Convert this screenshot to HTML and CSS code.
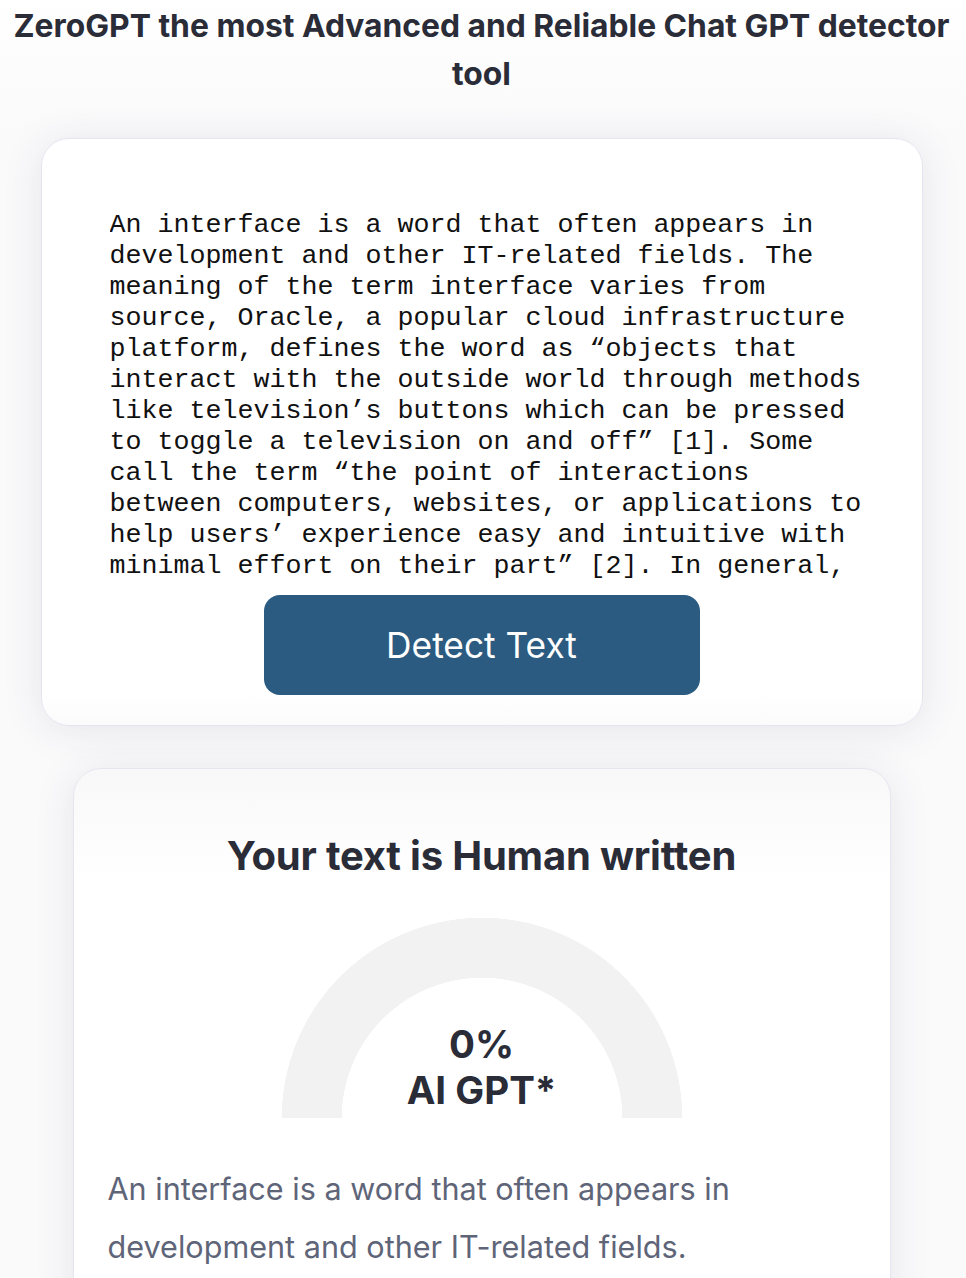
FILE: index.html
```html
<!DOCTYPE html>
<html lang="en">
<head>
<meta charset="utf-8">
<title>ZeroGPT</title>
<link rel="stylesheet" href="styles.css">
</head>
<body>
<main class="page">
  <h1 class="title">ZeroGPT the most Advanced and Reliable Chat GPT detector tool</h1>

  <section class="card card-input">
    <div class="input-text">An interface is a word that often appears in development and other IT-related fields. The meaning of the term interface varies from source, Oracle, a popular cloud infrastructure platform, defines the word as “objects that interact with the outside world through methods like television’s buttons which can be pressed to toggle a television on and off” [1]. Some call the term “the point of interactions between computers, websites, or applications to help users’ experience easy and intuitive with minimal effort on their part” [2]. In general,</div>
    <button class="detect-btn" type="button">Detect Text</button>
  </section>

  <section class="card card-result">
    <h2 class="result-title">Your text is Human written</h2>
    <div class="gauge">
      <div class="gauge-value">0%</div>
      <div class="gauge-label">AI GPT*</div>
    </div>
    <p class="result-text">An interface is a word that often appears in development and other IT-related fields.</p>
  </section>
</main>
</body>
</html>
```

FILE: styles.css
```css
* {
  box-sizing: border-box;
}

html, body {
  margin: 0;
  padding: 0;
}

body {
  background: linear-gradient(#ffffff 0, #fafafb 130px) #fafafb;
  font-family: Inter, "Noto Sans", sans-serif;
  color: #2a2c37;
  overflow: hidden;
}

.page {
  display: flex;
  flex-direction: column;
  align-items: center;
  padding: 2px 3px 0 0;
}

.title {
  margin: 0;
  width: 100%;
  padding: 0 8px;
  font-size: 31.8px;
  line-height: 48px;
  font-weight: 700;
  text-align: center;
  color: #2a2c37;
}

.card {
  background: #fff;
  border: 1px solid #e5e5f1;
  border-radius: 28px;
  box-shadow: 0 4px 40px rgba(50, 50, 100, 0.1);
}

.card-input {
  margin-top: 40px;
  width: 882px;
  padding: 71px 0 30px 68px;
  display: flex;
  flex-direction: column;
  background: linear-gradient(#fff 0, #fff 555px, #fbfbfc 100%);
}

.input-text {
  width: 760px;
  height: 372px;
  overflow: hidden;
  font-family: "Liberation Mono", "DejaVu Sans Mono", monospace;
  font-size: 26.667px;
  line-height: 31px;
  color: #111;
}

.detect-btn {
  align-self: center;
  margin: 13px 0 0 -68px;
  width: 436px;
  height: 100px;
  border: none;
  border-radius: 16px;
  background: #2b5b80;
  color: #fff;
  font-family: Inter, "Noto Sans", sans-serif;
  font-size: 35.3px;
  font-weight: 400;
}

.card-result {
  margin-top: 42px;
  width: 818px;
  padding: 63px 34px 40px;
  display: flex;
  flex-direction: column;
  align-items: center;
  background: linear-gradient(#f8f8f9 0, #fff 110px);
}

.result-title {
  margin: 0;
  font-size: 40px;
  line-height: 48px;
  font-weight: 700;
  color: #2a2c37;
  letter-spacing: -0.2px;
}

.gauge {
  margin-top: 38px;
  width: 400px;
  height: 200px;
  background: radial-gradient(circle at 50% 100%, #fff 0, #fff 140px, #f2f2f2 140.5px, #f2f2f2 200px, transparent 200.5px);
  display: flex;
  flex-direction: column;
  justify-content: flex-end;
  align-items: center;
  padding-bottom: 5px;
}

.gauge-value,
.gauge-label {
  font-size: 38.5px;
  line-height: 46px;
  font-weight: 700;
  color: #2a2c37;
}

.result-text {
  margin: 42px 0 0;
  align-self: stretch;
  font-size: 30.6px;
  line-height: 58px;
  color: #5f6579;
}
```
